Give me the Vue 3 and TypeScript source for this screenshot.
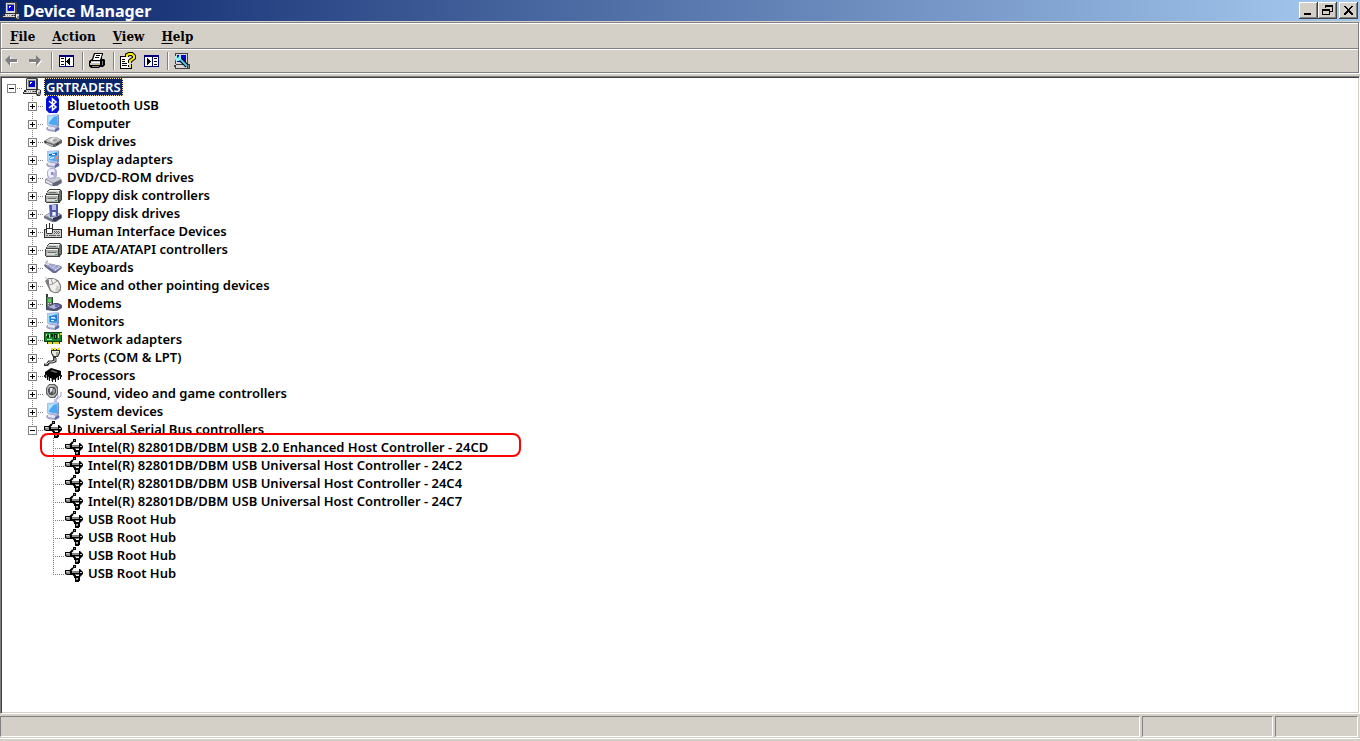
<script setup lang="ts">
import { ref, computed } from 'vue'

type Shape = { d: string; f?: string; s?: string; w?: number }

interface Row {
  label: string
  icon: string
  level: number
  expander?: '+' | '-'
  last?: boolean
  marked?: boolean
}

const f = (fill: string, d: string): Shape => ({ d, f: fill })
const s = (stroke: string, d: string, w = 1): Shape => ({ d, s: stroke, w })

const screen: Shape[] = [
  f('#b4bce4', 'M3 1L14 0L15 1V12L13 13L4 12L3 11Z'),
  f('#8088c4', 'M14 1L15 1V12L13 13Z'),
  f('#a8d8fa', 'M4 2L13 1V11L4 11Z'),
  f('#4ca8f0', 'M6 4L13 2V11L10 11L5 10Z'),
  f('#b8e8ff', 'M5 3L10 2L7 6L5 8Z'),
  f('#a0a4c8', 'M3 13L8 12L14 13L16 15L11 18L4 17L2 15Z'),
  f('#e4e6f6', 'M4 13L9 13L12 14L10 16L4 15Z'),
  f('#646ca8', 'M11 15L15 13L15 16L11 18Z'),
]

const drive: Shape[] = [
  f('#404040', 'M5 3H16L18 5V14L16 16V17H2V16H1V9H2V7H3V5H4V4H5Z'),
  f('#d4d4d0', 'M5 4H16V5H15V8H3V7H4V5H5Z'),
  f('#f4f4f4', 'M5 4H15V5H5ZM2 9H14V10H2Z'),
  f('#a8aca8', 'M3 6H14V8H3ZM2 10H14V16H2Z'),
  f('#68706c', 'M5 6H12V7H5ZM4 12H12V13H4ZM15 5H17V14H15Z'),
  f('#d8d8d8', 'M3 13H13V15H3Z'),
  f('#30a050', 'M11 14H13V15H11Z'),
]

const icons: Record<string, Shape[]> = {
  pc: [
    f('#404040', 'M4 0H14L15 1V12H3V1Z'),
    f('#d8d8d8', 'M4 1H13V11H4Z'),
    f('#808080', 'M5 2H12V9H5Z'),
    f('#0000d8', 'M6 3H12V9H6Z'),
    f('#fff', 'M7 4H9V5H7ZM7 5H8V6H7Z'),
    f('#303030', 'M3 11H15L18 12V15L17 18H14L13 16H0V14H1V12H3Z'),
    f('#d0d0d0', 'M3 12H13V13H3ZM1 14H13V15H1ZM14 12H17V16H14Z'),
    f('#888', 'M3 13H4V14H3ZM5 13H6V14H5ZM7 13H8V14H7ZM9 13H10V14H9ZM11 13H12V14H11ZM15 14H17V17H15Z'),
    f('#f8f8f8', 'M4 13H5V14H4ZM6 13H7V14H6ZM8 13H9V14H8ZM14 13H15V15H14Z'),
  ],
  bluetooth: [
    f('#0010d8', 'M4 0H13L15 3V14L13 17H5L2 14V3Z'),
    s('#fff', 'M5 5L12 11L8.5 14V3L12 6L5 12', 1.5),
  ],
  computer: screen,
  display: [
    ...screen,
    f('#1868c8', 'M5 4L13 3V5L5 6Z'),
    f('#fff', 'M6 8L10 7V8L6 9ZM8 4H11V5H8Z'),
    f('#ec8c5c', 'M11 7L13 6V9L11 10Z'),
  ],
  disk: [
    f('#646464', 'M0 9L7 5H12L18 8V11L11 15H8L0 11Z'),
    f('#c8c8c8', 'M1 9L8 5H12L17 8L10 12Z'),
    f('#f4f4f4', 'M5 8L9 6L13 8L9 10Z'),
    f('#989898', 'M8 8L11 7L14 8L10 10Z'),
    f('#b4b4b4', 'M0 10L9 13V15L1 11Z'),
    f('#404040', 'M12 12L15 10V12L12 14ZM0 9L2 9L3 11L1 11Z'),
  ],
  dvd: [
    f('#9094a8', 'M1 11L5 9H15L18 12V15L13 18H8L1 15Z'),
    f('#c8ccd4', 'M2 11L7 9H14L17 11L10 15Z'),
    f('#606478', 'M9 15L17 12V15L12 18H9Z'),
    f('#e4e6ec', 'M2 12L8 15V17L2 14Z'),
    f('#b0b0d8', 'M6 0H11L13 3V8L11 11H6L3 8V3Z'),
    f('#eeeef8', 'M6 1H10L11 4L8 5L10 9L6 10L4 7V3Z'),
    f('#8c8cc8', 'M7 4H9V7H7Z'),
  ],
  controller: drive,
  floppy: [
    f('#6c7088', 'M0 12L5 9H15L18 11V14L12 18H8L0 14Z'),
    f('#d0d0dc', 'M1 12L6 9H14L16 11L9 15Z'),
    f('#303850', 'M9 14L17 11V14L12 17H9Z'),
    f('#5058a8', 'M5 1L14 0V12L6 13Z'),
    f('#b8c0f0', 'M8 1H12V6H8ZM8 8H12V12H8Z'),
    f('#fff', 'M9 8H11V11H9Z'),
    f('#50b860', 'M3 12L5 13V14L3 13Z'),
  ],
  hid: [
    f('#303030', 'M0 7H18V16H0Z'),
    f('#d0d0d0', 'M1 8H17V15H1Z'),
    f('#606060', 'M10 9H11V10H10ZM12 9H13V10H12ZM14 9H15V10H14ZM11 10H12V11H11ZM13 10H14V11H13ZM15 10H16V11H15ZM10 11H11V12H10ZM12 11H13V12H12ZM14 11H15V12H14ZM2 13H4V14H2ZM5 13H12V14H5ZM13 13H16V14H13Z'),
    f('#303030', 'M2 2H9V11L8 12H3L2 11Z'),
    f('#fff', 'M3 2H8V11H3Z'),
    f('#303030', 'M5 1H6V6H5ZM3 6H8V7H3Z'),
  ],
  keyboard: [
    f('#686c94', 'M0 7L3 5L17 8L18 10L12 15L9 15L1 9Z'),
    f('#e0e0f4', 'M1 6L4 5L17 9L11 13Z'),
    s('#9498c8', 'M3 7L11 12M5 6L13 11M7 6L15 10M3 9L7 6M6 10L10 7M9 12L14 8', 1),
    f('#b8b8c8', 'M1 4L4 2V4L2 6Z'),
  ],
  mouse: [
    f('#7c7c7c', 'M4 2H9L14 4L17 9V14L14 17H10L6 15L4 11L1 5Z'),
    f('#f2f0ec', 'M5 3L10 3L14 6L16 10V13L13 16H10L7 14L5 9Z'),
    s('#989898', 'M5 9L9 8L13 5M9 8L7 3', 1),
    s('#c0c0c0', 'M1 1L5 4', 1),
    f('#d0ccc8', 'M13 9L16 11L14 16L11 15Z'),
  ],
  modem: [
    f('#284028', 'M2 0H4V3H9V14H2Z'),
    f('#707878', 'M3 3H8V13H3Z'),
    f('#48d848', 'M4 5H7V8H4Z'),
    f('#e0e0e0', 'M4 9H5V10H4ZM6 9H7V10H6ZM4 11H5V12H4ZM6 11H7V12H6Z'),
    f('#505478', 'M2 13L10 9H14L18 11V14L13 17H8L2 16Z'),
    f('#b0b4d0', 'M4 13L11 10L16 12L10 15Z'),
    f('#6868c8', 'M11 10H14V13H11Z'),
  ],
  monitor: [
    ...screen,
    f('#1c80d8', 'M5 4L13 3V9L6 10Z'),
    f('#fff', 'M7 5H11V6H7ZM7 8H10V9H7Z'),
    f('#70c8fc', 'M7 6H12V7H7Z'),
  ],
  network: [
    f('#104010', 'M0 2H18V12H16V14H3V12H0Z'),
    f('#188830', 'M1 3H17V11H1Z'),
    f('#b0e8a0', 'M2 4H3V6H2ZM5 4H6V8H5ZM3 9H8V10H3ZM14 4H15V8H14Z'),
    f('#082808', 'M3 5H5V8H3ZM7 4H9V7H7ZM10 4H13V9H10Z'),
    f('#e0d030', 'M4 12H8V14H4ZM9 12H15V14H9ZM16 3H18V5H16Z'),
    f('#888', 'M11 5H12V8H11Z'),
  ],
  port: [
    f('#303030', 'M7 1H16V5L14 9H12V12H9V9L7 5Z'),
    f('#e8e8e0', 'M8 3H15V5L13 8H10L8 5Z'),
    f('#f4e020', 'M7 0H9V2H7ZM10 0H12V2H10ZM13 0H16V2H13Z'),
    f('#a8a8a0', 'M12 4H15L13 8H12Z'),
    s('#303030', 'M11 10V13L8 14H5L3 17H0', 3),
    s('#d8d8d8', 'M11 10V13L8 14H5L3 16H1', 1),
  ],
  cpu: [
    f('#000', 'M1 6L7 2L17 5V9L10 14L1 9Z'),
    s('#000', 'M1.5 7V12M3.5 9V14M5.5 10V15M8.5 11V16M11.5 12V16M14.5 10V14M16.5 8V13', 1),
    s('#a0a0a0', 'M2.5 9V12M4.5 11V14M7.5 13V15M13.5 12V14', 1),
    f('#686868', 'M6 5L8 4L14 6L12 7Z'),
    f('#202020', 'M0 9H2V11H0ZM16 9H18V11H16Z'),
  ],
  sound: [
    f('#606060', 'M5 0H11L14 3V10L11 14H6L2 10V4Z'),
    f('#b8b8b8', 'M5 1H10L13 4V9L10 13H6L3 9V4Z'),
    f('#505058', 'M6 3H10L12 5V9L9 11H6L4 8V5Z'),
    f('#e4e4f0', 'M6 4H9L8 7L6 9Z'),
    f('#9a9aa0', 'M8 5H11V8L9 10Z'),
    s('#9c9ce0', 'M17 8V12L12 16M14 11V13L10 17', 1),
    f('#c0c0ec', 'M10 15H13V18H10Z'),
  ],
  system: screen,
  usb: [
    s('#000', 'M4 8L8 4M7 9L10 12V14', 2),
    s('#000', 'M4 9H16', 3),
    f('#000', 'M8 1H11V4H8ZM0 6H5L7 7V11H2L0 10ZM14 5H15L18 8V10L15 13H14ZM10 12H15V17H14V18H10Z'),
    f('#909090', 'M1 7H5V10H2L1 9ZM7 8H14V9H7ZM9 2H10V3H9ZM11 14H13V16H11Z'),
    f('#ccc', 'M1 7H4V8H1ZM15 8H17V9H15ZM12 14H13V15H12Z'),
  ],
  back: [
    f('#fff', 'M3 9L8 4V8H15V11H8V15Z'),
    f('#808080', 'M2 8L7 3V7H14V10H7V14Z'),
  ],
  forward: [
    f('#fff', 'M16 9L11 4V8H4V11H11V15Z'),
    f('#808080', 'M15 8L10 3V7H3V10H10V14Z'),
  ],
  paneLeft: [
    f('#000078', 'M2 3H17V15H2Z'),
    f('#fff', 'M3 5H8V14H3ZM9 5H16V14H9Z'),
    f('#000', 'M4 6H7V7H4ZM4 9H7V10H4ZM4 12H7V13H4ZM13 6V13H12V12H11V11H10V10H9V9H10V8H11V7H12V6Z'),
  ],
  paneRight: [
    f('#000078', 'M2 3H17V15H2Z'),
    f('#fff', 'M3 5H10V14H3ZM11 5H16V14H11Z'),
    f('#000', 'M12 6H15V7H12ZM12 9H15V10H12ZM12 12H15V13H12ZM5 6H6V7H7V8H8V9H9V10H8V11H7V12H6V13H5Z'),
  ],
  printer: [
    f('#000', 'M6 1H15V3L14 4V7H16L17 8V13L15 15H12L11 16H3L1 14V9L4 7L5 4Z'),
    f('#fff', 'M7 2H14L12 8H5Z'),
    f('#000', 'M8 3H12V4H8ZM7 5H11V6H7Z'),
    f('#c0c0c0', 'M3 9H12V10H3ZM2 11H12V13H2Z'),
    f('#808080', 'M14 9H15V13H14ZM4 14H11V15H4Z'),
    f('#e8d820', 'M8 12H10V13H8Z'),
    f('#fff', 'M3 10H12V11H3Z'),
  ],
  help: [
    f('#000', 'M1 4H10V17H1Z'),
    f('#fff', 'M2 5H10V16H2Z'),
    f('#000', 'M3 7H6V8H3ZM3 9H6V10H3ZM3 11H8V12H3ZM3 13H8V14H3ZM12 16H13V17H1V16ZM12 12H13V17H12Z'),
    s('#000', 'M8 5V3L10 2H13L15 4V6L11 9V11M11 13V15', 4),
    s('#f8f000', 'M8 5V3L10 2H13L15 4V6L11 9V11M11 13V15', 2),
  ],
  scan: [
    f('#404040', 'M2 1H15V12H17V17H2V15H1V13H3V12H2Z'),
    f('#d8d8d8', 'M3 2H14V12H3ZM3 13H14V16H3Z'),
    f('#0000d0', 'M4 3H13V10H4Z'),
    s('#000', 'M5 5L14 14', 4),
    s('#50c8f0', 'M5 5L14 14', 2),
    f('#90f4fc', 'M2 4H4V6H6V3H8V7L6 9H3L2 7Z'),
    f('#808080', 'M15 13H16V16H15Z'),
  ],
}

const rows: Row[] = [
  { label: 'GRTRADERS', icon: 'pc', level: 0, expander: '-' },
  { label: 'Bluetooth USB', icon: 'bluetooth', level: 1, expander: '+' },
  { label: 'Computer', icon: 'computer', level: 1, expander: '+' },
  { label: 'Disk drives', icon: 'disk', level: 1, expander: '+' },
  { label: 'Display adapters', icon: 'display', level: 1, expander: '+' },
  { label: 'DVD/CD-ROM drives', icon: 'dvd', level: 1, expander: '+' },
  { label: 'Floppy disk controllers', icon: 'controller', level: 1, expander: '+' },
  { label: 'Floppy disk drives', icon: 'floppy', level: 1, expander: '+' },
  { label: 'Human Interface Devices', icon: 'hid', level: 1, expander: '+' },
  { label: 'IDE ATA/ATAPI controllers', icon: 'controller', level: 1, expander: '+' },
  { label: 'Keyboards', icon: 'keyboard', level: 1, expander: '+' },
  { label: 'Mice and other pointing devices', icon: 'mouse', level: 1, expander: '+' },
  { label: 'Modems', icon: 'modem', level: 1, expander: '+' },
  { label: 'Monitors', icon: 'monitor', level: 1, expander: '+' },
  { label: 'Network adapters', icon: 'network', level: 1, expander: '+' },
  { label: 'Ports (COM & LPT)', icon: 'port', level: 1, expander: '+' },
  { label: 'Processors', icon: 'cpu', level: 1, expander: '+' },
  { label: 'Sound, video and game controllers', icon: 'sound', level: 1, expander: '+' },
  { label: 'System devices', icon: 'system', level: 1, expander: '+' },
  { label: 'Universal Serial Bus controllers', icon: 'usb', level: 1, expander: '-', last: true },
  { label: 'Intel(R) 82801DB/DBM USB 2.0 Enhanced Host Controller - 24CD', icon: 'usb', level: 2, marked: true },
  { label: 'Intel(R) 82801DB/DBM USB Universal Host Controller - 24C2', icon: 'usb', level: 2 },
  { label: 'Intel(R) 82801DB/DBM USB Universal Host Controller - 24C4', icon: 'usb', level: 2 },
  { label: 'Intel(R) 82801DB/DBM USB Universal Host Controller - 24C7', icon: 'usb', level: 2 },
  { label: 'USB Root Hub', icon: 'usb', level: 2 },
  { label: 'USB Root Hub', icon: 'usb', level: 2 },
  { label: 'USB Root Hub', icon: 'usb', level: 2 },
  { label: 'USB Root Hub', icon: 'usb', level: 2, last: true },
]

const selected = ref(0)
const rootOpen = ref(true)
const usbOpen = ref(true)

const visible = computed(() =>
  rows
    .map((row, index) => ({ row, index }))
    .filter(({ row }) => row.level === 0 || (rootOpen.value && (row.level === 1 || usbOpen.value))),
)

function isOpen(row: Row): boolean {
  if (row.expander !== '-') return false
  return row.level === 0 ? rootOpen.value : usbOpen.value
}

function toggle(row: Row): void {
  if (row.expander !== '-') return
  if (row.level === 0) rootOpen.value = !rootOpen.value
  else usbOpen.value = !usbOpen.value
}

const menus = ['File', 'Action', 'View', 'Help']

const tools: ({ icon: string; label: string; disabled?: boolean } | null)[] = [
  { icon: 'back', label: 'Back', disabled: true },
  { icon: 'forward', label: 'Forward', disabled: true },
  null,
  { icon: 'paneLeft', label: 'Show/Hide Console Tree' },
  null,
  { icon: 'printer', label: 'Print' },
  null,
  { icon: 'help', label: 'Help' },
  { icon: 'paneRight', label: 'Show/Hide Action Pane' },
  null,
  { icon: 'scan', label: 'Scan for hardware changes' },
]
</script>

<template>
  <div class="window">
    <header class="titlebar">
      <svg class="icon" viewBox="0 0 18 18" aria-hidden="true">
        <path v-for="(p, i) in icons.pc" :key="i" :d="p.d" :fill="p.f ?? 'none'" />
      </svg>
      <h1>Device Manager</h1>
      <div class="controls">
        <button type="button" aria-label="Minimize">
          <svg viewBox="0 0 15 13"><path d="M3 9H10V11H3Z" /></svg>
        </button>
        <button type="button" aria-label="Restore">
          <svg viewBox="0 0 15 13">
            <path fill-rule="evenodd" d="M5 1H13V8H10V7H12V3H6V4H5ZM2 5H10V11H2ZM3 7V10H9V7Z" />
          </svg>
        </button>
        <button type="button" class="close" aria-label="Close">
          <svg viewBox="0 0 15 13">
            <path d="M3 2H5V3H6V4H7V5H8V4H9V3H10V2H12V3H11V4H10V5H9V7H10V8H11V9H12V11H10V10H9V9H8V8H7V9H6V10H5V11H3V9H4V8H5V7H6V5H5V4H4V3H3Z" />
          </svg>
        </button>
      </div>
    </header>

    <div class="bands">
      <nav class="menubar" aria-label="Menu">
        <button v-for="m in menus" :key="m" type="button"><u>{{ m[0] }}</u>{{ m.slice(1) }}</button>
      </nav>
      <div class="toolbar" role="toolbar" aria-label="Standard">
        <template v-for="(t, i) in tools" :key="i">
          <button v-if="t" type="button" :aria-label="t.label" :disabled="t.disabled">
            <svg class="icon" viewBox="0 0 18 18">
              <path v-for="(p, k) in icons[t.icon]" :key="k" :d="p.d" :fill="p.f ?? 'none'" :stroke="p.s ?? 'none'" :stroke-width="p.w" />
            </svg>
          </button>
          <span v-else class="sep"></span>
        </template>
      </div>
    </div>

    <main class="pane">
      <ul class="tree" role="tree" aria-label="Devices">
        <li
          v-for="{ row, index } in visible"
          :key="index"
          class="row"
          role="treeitem"
          :aria-level="row.level + 1"
          :aria-selected="selected === index"
          :aria-expanded="row.expander ? isOpen(row) : undefined"
        >
          <span v-for="n in row.level" :key="n" class="cell"></span>
          <span class="cell branch" :class="{ first: row.level === 0, last: row.last }">
            <button
              v-if="row.expander"
              type="button"
              class="expander"
              :class="{ plus: !isOpen(row) }"
              :aria-label="(isOpen(row) ? 'Collapse ' : 'Expand ') + row.label"
              @click="toggle(row)"
            ></button>
          </span>
          <svg class="icon" viewBox="0 0 18 18" aria-hidden="true">
            <path v-for="(p, k) in icons[row.icon]" :key="k" :d="p.d" :fill="p.f ?? 'none'" :stroke="p.s ?? 'none'" :stroke-width="p.w" />
          </svg>
          <span class="label" :class="{ selected: selected === index }" @click="selected = index">{{ row.label }}</span>
          <span v-if="row.marked" class="mark"></span>
        </li>
      </ul>
    </main>

    <footer class="status">
      <span class="grow"></span>
      <span class="mid"></span>
      <span class="end"></span>
    </footer>
  </div>
</template>

<style>
body {
  margin: 0;
  background: #d4d0c8;
}
</style>

<style scoped>
.window {
  display: flex;
  flex-direction: column;
  height: 100vh;
  background: #d4d0c8;
  color: #000;
  font: 600 13px/18px "Noto Sans", sans-serif;
  overflow: hidden;
}

button {
  margin: 0;
  padding: 0;
  border: 0;
  background: none;
  color: inherit;
  font: inherit;
}

.icon {
  flex: none;
  display: block;
  width: 18px;
  height: 18px;
}

.titlebar {
  flex: none;
  display: flex;
  align-items: center;
  height: 21px;
  margin-bottom: 1px;
  padding: 0 2px;
  background: linear-gradient(to right, #0a246a, #a6caf0);
}

.titlebar h1 {
  flex: 1;
  margin: 0 0 0 3px;
  color: #fff;
  font: 700 16px/22px "Noto Sans", sans-serif;
}

.controls {
  display: flex;
}

.controls button {
  width: 19px;
  height: 17px;
  padding: 1px;
  box-sizing: border-box;
  background: #d4d0c8;
  box-shadow: inset -1px -1px #404040, inset 1px 1px #fff, inset -2px -2px #808080;
}

.controls svg {
  display: block;
  width: 15px;
  height: 13px;
  margin: 1px;
}

.controls .close {
  margin-left: 2px;
}

.bands {
  flex: none;
  margin: 0 1px 1px 0;
  border: 1px solid #808080;
  box-shadow: 1px 1px #fff;
}

.menubar {
  display: flex;
  gap: 1px;
  height: 25px;
  padding-left: 1px;
  box-sizing: border-box;
  box-shadow: inset 1px 1px #fff;
}

.menubar button {
  padding: 2px 8px 0;
  font: 700 12px/22px "DejaVu Serif", serif;
}

.menubar u {
  text-underline-offset: 2px;
}

.toolbar {
  display: flex;
  align-items: center;
  height: 24px;
  padding-left: 1px;
  box-sizing: border-box;
  border-top: 1px solid #808080;
  box-shadow: inset 1px 1px #fff;
}

.toolbar button {
  width: 23px;
  padding-left: 1px;
}

.sep {
  width: 2px;
  height: 18px;
  margin: 0 3px;
  background: linear-gradient(to right, #808080 50%, #fff 50%);
}

.pane {
  flex: 1;
  min-height: 0;
  margin-top: 2px;
  overflow: hidden;
  background: #fff;
  border-style: solid;
  border-width: 1px;
  border-color: #808080 #fff #fff #808080;
  box-shadow: inset 1px 1px #404040, inset -1px -1px #d4d0c8;
}

.tree {
  margin: 0;
  padding: 1px;
  list-style: none;
}

.row {
  position: relative;
  display: flex;
  height: 18px;
}

.cell {
  position: relative;
  flex: none;
  width: 21px;
  height: 18px;
}

.branch {
  display: flex;
}

.branch::before,
.branch::after {
  content: "";
  position: absolute;
}

.branch::before {
  top: 0;
  left: 9px;
  width: 1px;
  height: 18px;
  background: repeating-linear-gradient(to bottom, #808080 0 1px, transparent 1px 2px);
}

.branch::after {
  top: 10px;
  left: 9px;
  right: 1px;
  height: 1px;
  background: repeating-linear-gradient(to right, #808080 0 1px, transparent 1px 2px);
}

.branch.first::before {
  display: none;
}

.branch.last::before {
  height: 11px;
}

.expander {
  position: relative;
  z-index: 1;
  width: 9px;
  height: 9px;
  margin: 6px 0 0 5px;
  border: 1px solid #808080;
  background: linear-gradient(#000, #000) center / 5px 1px no-repeat #fff;
}

.expander.plus {
  background:
    linear-gradient(#000, #000) center / 5px 1px no-repeat,
    linear-gradient(#000, #000) center / 1px 5px no-repeat,
    #fff;
}

.label {
  margin-left: 3px;
  padding: 0 2px;
  white-space: nowrap;
}

.label.selected {
  color: #fff;
  background: #0a246a;
  outline: 1px dotted #f5db95;
  outline-offset: -1px;
}

.mark {
  position: absolute;
  z-index: 2;
  top: -5px;
  left: 38px;
  width: 477px;
  height: 20px;
  border: 2px solid #f00;
  border-radius: 8px;
}

.status {
  flex: none;
  display: flex;
  gap: 2px;
  height: 21px;
  margin: 2px 0 4px;
  padding-right: 2px;
  box-shadow: 0 1px #d4d0c8, 0 2px #fff;
}

.status span {
  border-style: solid;
  border-width: 1px;
  border-color: #808080 #fff #fff #808080;
}

.grow {
  flex: 1;
}

.mid {
  width: 129px;
}

.end {
  width: 81px;
}
</style>
